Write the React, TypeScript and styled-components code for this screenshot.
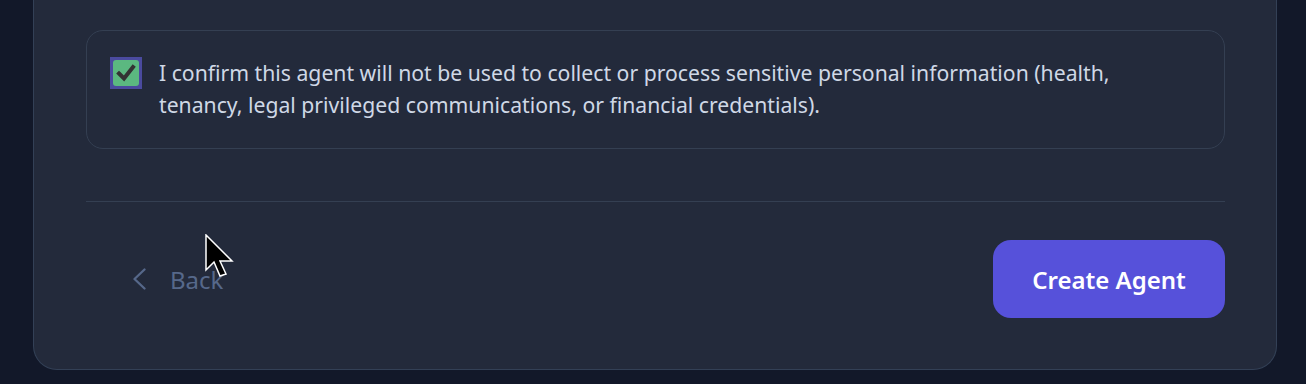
import React from 'react'
import styled, { createGlobalStyle } from 'styled-components';

const GlobalStyle = createGlobalStyle`
    html, body {
        margin : 0;
        padding : 0;
        background-color : #121829;
        font-family : "Noto Sans", "Open Sans", sans-serif;
    }
`;

const Page = styled.div `
    position : relative;
    padding : 0 29px 14px 33px;
    height : 384px;
    box-sizing : border-box;
`;

const Card = styled.div `
    background-color : #232a3b;
    border : 1px solid #334056;
    border-top : none;
    border-radius : 0 0 24px 24px;
    padding : 30px 51px 52px 52px;
    height : 100%;
    box-sizing : border-box;
`;

const ConsentBox = styled.label `
    display : flex;
    align-items : flex-start;
    gap : 17px;
    border : 1px solid #343f52;
    border-radius : 17px;
    padding : 26px 24px 26px 23px;
    height : 119px;
    box-sizing : border-box;
    cursor : pointer;
`;

const CheckBox = styled.span<{ checked : boolean }> `
    flex : none;
    width : 32px;
    height : 32px;
    box-sizing : border-box;
    border : 3px solid #4a4a9e;
    background-color : #4a4a9e;
    display : flex;
    align-items : center;
    justify-content : center;

    & > span {
        width : 26px;
        height : 26px;
        border-radius : 3px;
        background-color : ${p => p.checked ? '#5bb880' : '#232a3b'};
        display : flex;
        align-items : center;
        justify-content : center;
    }
`;

const ConsentText = styled.p `
    margin : 0;
    max-width : 1000px;
    color : #cfd8e6;
    font-size : 21.2px;
    line-height : 32px;
`;

const Divider = styled.hr `
    border : none;
    border-top : 1px solid #343f52;
    margin : 52px 0 38px;
`;

const Footer = styled.div `
    display : flex;
    justify-content : space-between;
    align-items : center;
`;

const BackButton = styled.button `
    display : flex;
    align-items : center;
    gap : 23px;
    background : transparent;
    border : none;
    padding : 0 0 0 46px;
    color : #56688a;
    font-family : inherit;
    font-size : 24px;
    cursor : pointer;
`;

const PrimaryButton = styled.button `
    width : 232px;
    height : 78px;
    border : none;
    border-radius : 18px;
    background-color : #5651da;
    color : #ffffff;
    font-family : inherit;
    font-size : 24px;
    font-weight : 600;
    cursor : pointer;
`;

const Pointer = styled.svg `
    position : absolute;
    left : 205px;
    top : 234px;
`;

function App() {
    const [checked, setChecked] = React.useState(true);

    return (
        <>
            <GlobalStyle />
            <Page>
                <Card>
                    <ConsentBox onClick={() => setChecked(!checked)}>
                        <CheckBox checked={checked}>
                            <span>
                                {checked && (
                                    <svg width="22" height="22" viewBox="0 0 22 22">
                                        <path d="M4 11.5 L9 16.5 L18 5" fill="none" stroke="#333333" strokeWidth="4" strokeLinecap="square" strokeLinejoin="miter" />
                                    </svg>
                                )}
                            </span>
                        </CheckBox>
                        <ConsentText>
                            I confirm this agent will not be used to collect or process sensitive personal information (health, tenancy, legal privileged communications, or financial credentials).
                        </ConsentText>
                    </ConsentBox>
                    <Divider />
                    <Footer>
                        <BackButton>
                            <svg width="15" height="22" viewBox="0 0 15 22">
                                <path d="M12.5 1.5 L2.5 11 L12.5 20.5" fill="none" stroke="#56688a" strokeWidth="2.3" strokeLinecap="round" strokeLinejoin="round" />
                            </svg>
                            Back
                        </BackButton>
                        <PrimaryButton>Create Agent</PrimaryButton>
                    </Footer>
                </Card>
                <Pointer width="32" height="46" viewBox="0 0 32 46">
                    <path d="M1 1 L1 36 L9 28 L15 42 L21 40 L15 27 L27 27 Z" fill="#000000" stroke="#ffffff" strokeWidth="1.5" strokeLinejoin="miter" />
                </Pointer>
            </Page>
        </>
    )
}

export default App
